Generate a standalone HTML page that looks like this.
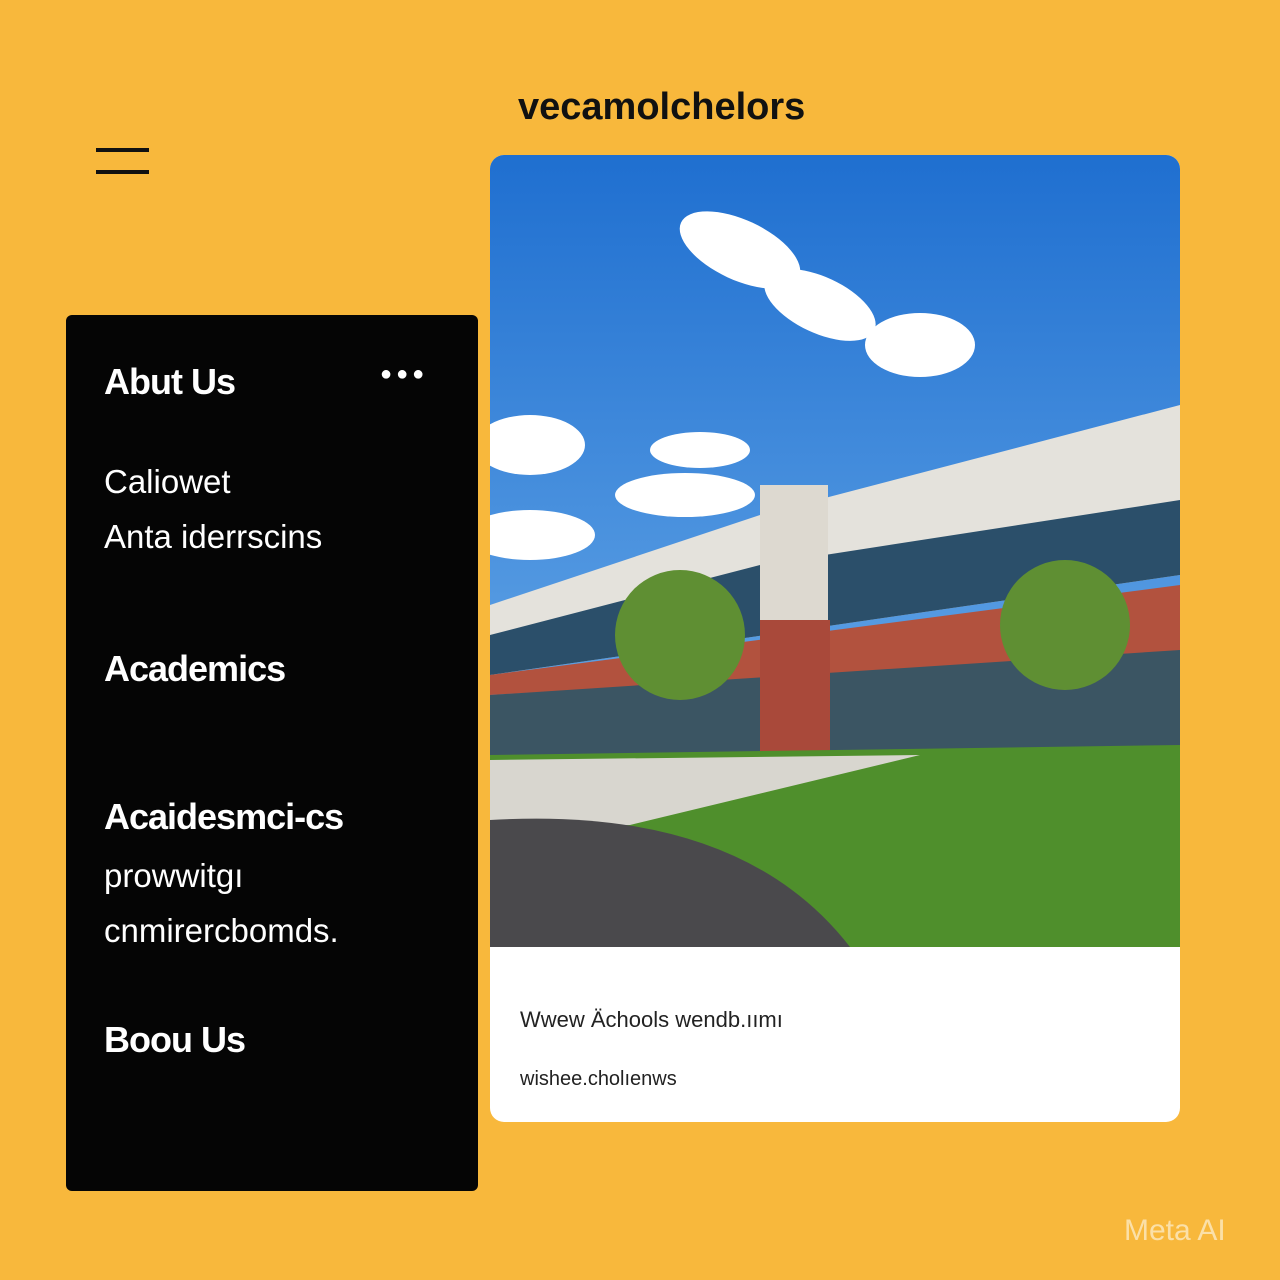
<!DOCTYPE html>
<html><head><meta charset="utf-8"><style>
body{margin:0;width:1280px;height:1280px;background:#F8B83C;position:relative;overflow:hidden;font-family:"Liberation Sans",sans-serif}
.logo{position:absolute;left:518px;top:86px;font-size:38px;font-weight:bold;color:#111;letter-spacing:0px}
.ham{position:absolute;left:96px;width:53px;height:4px;background:#111}
.panel{position:absolute;left:66px;top:315px;width:412px;height:876px;background:#050505;border-radius:6px;color:#fff}
.panel div{position:absolute;left:38px}
.h{font-size:36px;font-weight:bold;letter-spacing:-1px}
.t{font-size:33px}
.dots{position:absolute;top:48px;font-size:20px;letter-spacing:4px}
.card{position:absolute;left:490px;top:155px;width:690px;height:967px;background:#fff;border-radius:14px;overflow:hidden}
.cap{position:absolute;left:30px;font-size:22px;color:#222}
.meta{position:absolute;left:1124px;top:1214px;font-size:30px;color:#fbe0a8}
</style></head><body>
<div class="logo">vecamolchelors</div>
<div class="ham" style="top:148px"></div><div class="ham" style="top:170px"></div>
<div class="panel">
<div class="h" style="top:46px">Abut Us</div>
<div class="dots" style="left:314px">●●●</div>
<div class="t" style="top:148px">Caliowet</div>
<div class="t" style="top:203px">Anta iderrscins</div>
<div class="h" style="top:333px">Academics</div>
<div class="h" style="top:481px">Acaidesmci-cs</div>
<div class="t" style="top:542px">prowwitgı</div>
<div class="t" style="top:597px">cnmirercbomds.</div>
<div class="h" style="top:704px">Boou Us</div>
</div>
<div class="card">
<svg width="690" height="792" viewBox="0 0 690 792">
<defs><linearGradient id="s" x1="0" y1="0" x2="0" y2="1"><stop offset="0" stop-color="#1f6fd0"/><stop offset="1" stop-color="#7ab8ee"/></linearGradient></defs>
<rect width="690" height="792" fill="url(#s)"/>
<g fill="#fff"><ellipse cx="250" cy="95" rx="65" ry="30" transform="rotate(25 250 95)"/><ellipse cx="330" cy="150" rx="60" ry="28" transform="rotate(25 330 150)"/><ellipse cx="430" cy="190" rx="55" ry="32"/><ellipse cx="40" cy="290" rx="55" ry="30"/><ellipse cx="210" cy="295" rx="50" ry="18"/><ellipse cx="195" cy="340" rx="70" ry="22"/><ellipse cx="40" cy="380" rx="65" ry="25"/></g>
<polygon points="0,450 270,360 690,250 690,420 0,520" fill="#e4e2dc"/>
<polygon points="0,480 270,410 690,345 690,420 0,520" fill="#2b4f6a"/>
<rect x="270" y="330" width="68" height="270" fill="#ddd9d0"/>
<polygon points="0,520 690,430 690,500 0,540" fill="#b2523e"/>
<polygon points="0,540 690,495 690,600 0,600" fill="#3b5563"/>
<rect x="270" y="465" width="70" height="135" fill="#a9493a"/>
<circle cx="190" cy="480" r="65" fill="#5f8f33"/><circle cx="575" cy="470" r="65" fill="#5f8f33"/>
<polygon points="0,600 690,590 690,792 0,792" fill="#4f8f2c"/>
<polygon points="0,605 430,600 140,670 0,675" fill="#d8d6cf"/>
<path d="M0,665 Q250,650 360,792 L0,792Z" fill="#4a494c"/>
</svg>
<div class="cap" style="top:852px">Wwew Ächools wendb.ıımı</div>
<div class="cap" style="top:913px;font-size:20px">wishee.cholıenws</div>
</div>
<div class="meta">Meta AI</div>
</body></html>
